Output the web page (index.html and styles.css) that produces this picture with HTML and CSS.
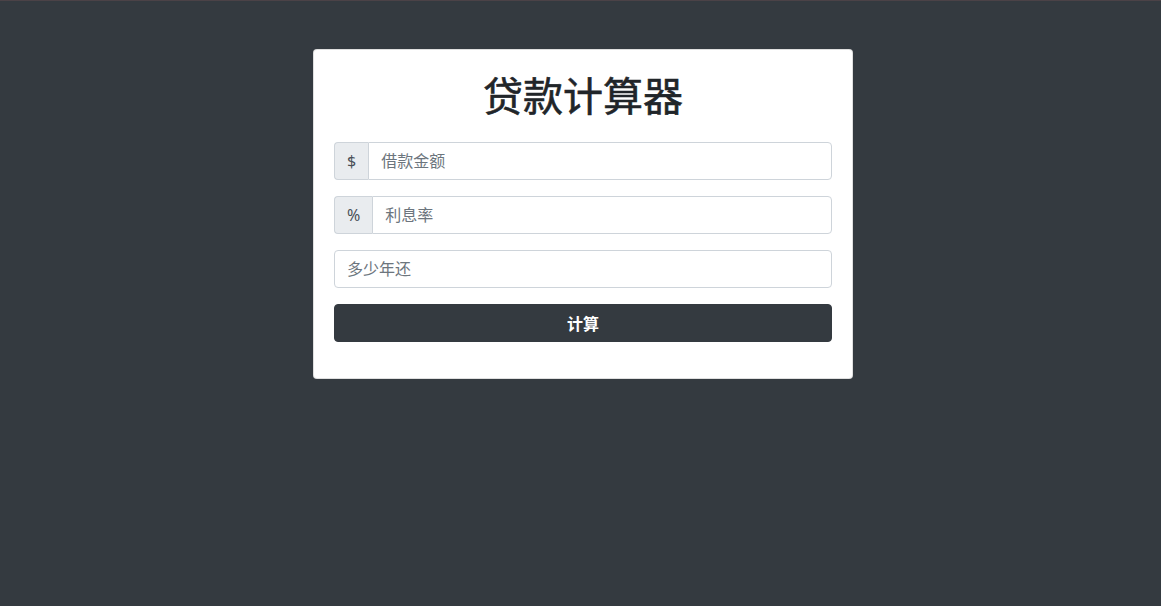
FILE: index.html
```html
<!DOCTYPE html>
<html lang="zh-CN">
<head>
  <meta charset="UTF-8">
  <title>贷款计算器</title>
  <link rel="stylesheet" href="styles.css">
</head>
<body>
  <div class="page">
    <div class="card">
      <h1>贷款计算器</h1>
      <form id="loan-form" autocomplete="off">
        <div class="input-group">
          <span class="addon">$</span>
          <input type="number" id="amount" placeholder="借款金额">
        </div>
        <div class="input-group">
          <span class="addon">%</span>
          <input type="number" id="interest" placeholder="利息率">
        </div>
        <div class="input-group">
          <input type="number" id="years" placeholder="多少年还">
        </div>
        <button type="submit" class="btn">计算</button>
      </form>
    </div>
  </div>
</body>
</html>
```

FILE: styles.css
```css
* {
  box-sizing: border-box;
}
body {
  margin: 0;
  min-height: 606px;
  background-color: #343a40;
  border-top: 1px solid #4b4247;
  font-family: "Noto Sans", "Noto Sans CJK SC", sans-serif;
  color: #212529;
}
.page {
  display: flex;
  justify-content: center;
  padding: 48px 0 0 5px;
}
.card {
  width: 540px;
  background-color: #fff;
  border: 1px solid rgba(0,0,0,0.125);
  border-radius: 4px;
  padding: 20px 20px 20px 20px;
}
h1 {
  margin: 0 0 24px 0;
  font-size: 40px;
  line-height: 48px;
  font-weight: 400;
  -webkit-text-stroke: 0.6px #212529;
  text-align: center;
  font-family: "Noto Sans CJK SC", sans-serif;
}
.input-group {
  display: flex;
  margin-bottom: 16px;
}
.addon {
  display: flex;
  align-items: center;
  padding: 0 12px;
  height: 38px;
  font-size: 16px;
  font-weight: 400;
  color: #495057;
  background-color: #e9ecef;
  border: 1px solid #ced4da;
  border-right: none;
  border-radius: 4px 0 0 4px;
}
input {
  flex: 1;
  height: 38px;
  padding: 6px 12px;
  font-family: "Noto Sans", "Noto Sans CJK SC", sans-serif;
  font-size: 16px;
  color: #495057;
  border: 1px solid #ced4da;
  border-radius: 4px;
  outline: none;
}
.addon + input {
  border-radius: 0 4px 4px 0;
}
input::placeholder {
  color: #6c757d;
}
.btn {
  display: block;
  width: 100%;
  height: 38px;
  margin-bottom: 16px;
  font-family: "Noto Sans CJK SC", sans-serif;
  font-size: 16px;
  font-weight: 700;
  color: #fff;
  background-color: #343a40;
  border: 1px solid #343a40;
  border-radius: 4px;
  cursor: pointer;
}
```
